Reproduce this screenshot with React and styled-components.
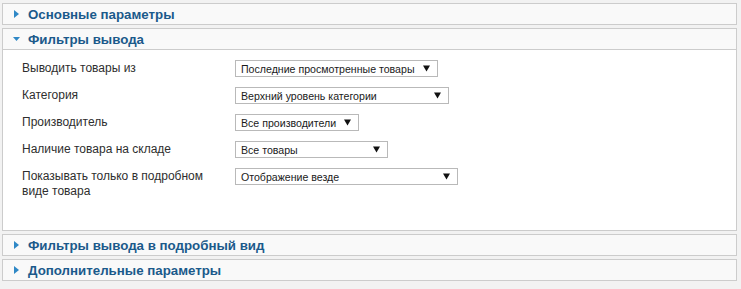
import React from "react";
import styled, { createGlobalStyle } from "styled-components";

const Global = createGlobalStyle`
  html, body { margin: 0; padding: 0; background: #f2f2f2; }
  body { font-family: "Liberation Sans", Arial, sans-serif; }
`;

const Page = styled.div`
  padding: 3px 4px 0 2px;
  display: flex;
  flex-direction: column;
  gap: 3px;
`;

const Panel = styled.section`
  border: 1px solid #cccccc;
  background: #ffffff;
`;

const Header = styled.div`
  height: 20px;
  background: #f9f9f9;
  display: flex;
  align-items: center;
  padding-left: 10px;
  gap: 8px;
  font-size: 13.3px;
  font-weight: bold;
  color: #1b5a8b;
  border-bottom: ${(p) => (p.$open ? "1px solid #cccccc" : "none")};
  cursor: pointer;
`;

const Caret = styled.svg`
  width: 7px;
  height: 8px;
  flex: none;
  fill: #2f88c6;
`;

const Body = styled.div`
  height: 180px;
  box-sizing: border-box;
  padding: 10px 20px 0 19px;
  display: grid;
  grid-template-columns: 213px auto;
  row-gap: 10px;
  align-content: start;
  justify-content: start;
`;

const Label = styled.div`
  font-size: 12px;
  line-height: 15px;
  padding-top: 1px;
  color: #2e2e2e;
  width: 200px;
`;

const Select = styled.div`
  box-sizing: border-box;
  height: 17px;
  width: ${(p) => p.$w}px;
  border: 1px solid #b9b9b9;
  background: #ffffff;
  display: flex;
  align-items: center;
  justify-content: space-between;
  padding: 0 7px 0 5px;
  font-size: 10.6px;
  color: #1a1a1a;
  white-space: nowrap;
`;

const Arrow = styled.svg`
  width: 7px;
  height: 7px;
  flex: none;
  fill: #111111;
`;

function Chevron({ open }) {
  return (
    <Caret viewBox="0 0 7 8">
      {open ? <polygon points="0,2 7,2 3.5,6" /> : <polygon points="1,0 6,4 1,8" />}
    </Caret>
  );
}

function Section({ title, open, children }) {
  return (
    <Panel>
      <Header $open={open}>
        <Chevron open={open} />
        <span>{title}</span>
      </Header>
      {open && children}
    </Panel>
  );
}

const rows = [
  { label: "Выводить товары из", value: "Последние просмотренные товары", w: 203 },
  { label: "Категория", value: "Верхний уровень категории", w: 214 },
  { label: "Производитель", value: "Все производители", w: 124 },
  { label: "Наличие товара на складе", value: "Все товары", w: 153 },
  { label: "Показывать только в подробном виде товара", value: "Отображение везде", w: 223 },
];

export default function App() {
  return (
    <>
      <Global />
      <Page>
        <Section title="Основные параметры" />
        <Section title="Фильтры вывода" open>
          <Body>
            {rows.map((r) => (
              <React.Fragment key={r.label}>
                <Label>{r.label}</Label>
                <Select $w={r.w}>
                  <span>{r.value}</span>
                  <Arrow viewBox="0 0 7 7">
                    <polygon points="0,0.5 7,0.5 3.5,6.5" />
                  </Arrow>
                </Select>
              </React.Fragment>
            ))}
          </Body>
        </Section>
        <Section title="Фильтры вывода в подробный вид" />
        <Section title="Дополнительные параметры" />
      </Page>
    </>
  );
}
